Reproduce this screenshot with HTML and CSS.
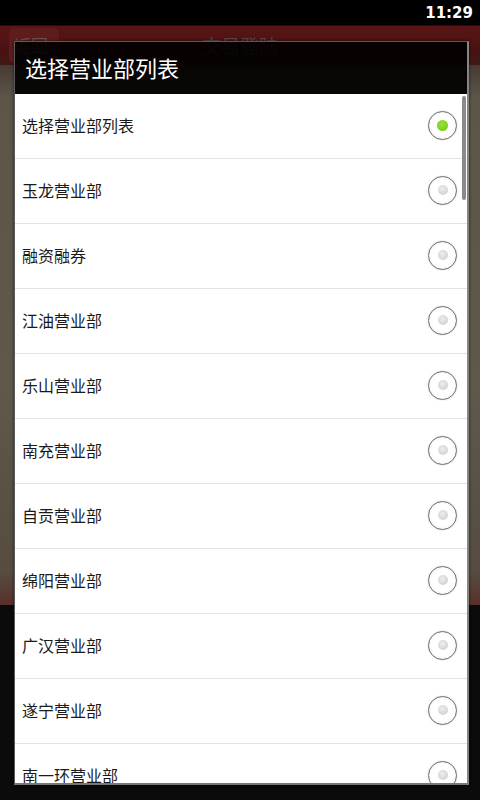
FILE: index.html
```html
<!DOCTYPE html>
<html lang="zh-CN">
<head>
    <meta charset="UTF-8">
    <meta name="viewport" content="width=device-width, initial-scale=1.0">
    <title>选择营业部列表</title>
    <link rel="stylesheet" href="styles.css">
</head>
<body>
    <div class="status">
        <span class="time">11:29</span>
    </div>
    <div class="screen">
        <div class="header">
            <span class="back">返回</span>
            <span class="header_title">交易登陆</span>
        </div>
        <div class="content"></div>
        <div class="bottom"></div>

        <!-- 弹出的营业部选择框 -->
        <div class="dialog">
            <div class="dialog_title">选择营业部列表</div>
            <div class="list">
                <ul>
                    <li><span>选择营业部列表</span><i class="radio checked"></i></li>
                    <li><span>玉龙营业部</span><i class="radio"></i></li>
                    <li><span>融资融券</span><i class="radio"></i></li>
                    <li><span>江油营业部</span><i class="radio"></i></li>
                    <li><span>乐山营业部</span><i class="radio"></i></li>
                    <li><span>南充营业部</span><i class="radio"></i></li>
                    <li><span>自贡营业部</span><i class="radio"></i></li>
                    <li><span>绵阳营业部</span><i class="radio"></i></li>
                    <li><span>广汉营业部</span><i class="radio"></i></li>
                    <li><span>遂宁营业部</span><i class="radio"></i></li>
                    <li><span>南一环营业部</span><i class="radio"></i></li>
                </ul>
                <div class="scrollbar"></div>
            </div>
        </div>
    </div>
</body>
</html>
```

FILE: styles.css
```css
*{
    margin: 0;
    padding: 0;
    box-sizing: border-box;
}
body{
    width: 480px;
    height: 800px;
    overflow: hidden;
    background-color: #0a0a0a;
    font-family: "Noto Sans CJK SC", "Noto Sans", sans-serif;
}
.status{
    height: 25px;
    background-color: #000;
    display: flex;
    justify-content: flex-end;
    align-items: center;
    padding-right: 7px;
}
.time{
    color: #fff;
    font-family: "DejaVu Sans", sans-serif;
    font-weight: bold;
    font-size: 15px;
}
.screen{
    position: relative;
    height: 775px;
}
.header{
    height: 40px;
    background: linear-gradient(#5a1515, #4a1212 60%, #3e1a14);
    border-top: 1px solid #2a0a0a;
    display: flex;
    align-items: center;
    position: relative;
}
.back{
    margin-left: 9px;
    width: 50px;
    height: 36px;
    border-radius: 6px;
    background-color: #5e1c1c;
    color: #6e5050;
    font-size: 17px;
    line-height: 34px;
    padding-left: 5px;
}
.header_title{
    position: absolute;
    left: 0;
    right: 0;
    text-align: center;
    color: #5a4444;
    font-size: 19px;
}
.content{
    height: 540px;
    background-color: #5d5649;
    background-image: linear-gradient(#463b32, #5c5548 6%, #5f584b 60%, #564c41 94%, #5a2f28);
}
.bottom{
    height: 195px;
    background-color: #0b0b0b;
}
.dialog{
    position: absolute;
    top: 16px;
    left: 14px;
    width: 455px;
    height: 744px;
    border: 1px solid #5a5a5a;
    border-right: 2px solid #858585;
    border-bottom: 2px solid #777;
    box-shadow: 0 0 3px rgba(0, 0, 0, 0.6);
    display: flex;
    flex-direction: column;
}
.dialog_title{
    height: 52px;
    background-color: rgba(0, 0, 0, 0.9);
    color: #fff;
    font-size: 22px;
    line-height: 50px;
    padding-left: 10px;
}
.list{
    position: relative;
    flex: 1;
    background-color: #fff;
    overflow: hidden;
}
li{
    list-style: none;
    height: 65px;
    border-bottom: 1px solid #e2e2e2;
    display: flex;
    align-items: center;
    justify-content: space-between;
    padding-left: 7px;
    padding-right: 10px;
    padding-bottom: 2px;
    color: #1a1a1a;
    font-size: 16px;
}
.radio{
    width: 29px;
    height: 29px;
    border-radius: 50%;
    border: 1.5px solid #6a6a6a;
    background: radial-gradient(circle, #fff 50%, #f3f3f3 100%);
    box-shadow: 0 0 2px rgba(0, 0, 0, 0.15);
    display: flex;
    justify-content: center;
    align-items: center;
}
.radio::after{
    content: "";
    width: 10px;
    height: 10px;
    border-radius: 50%;
    background: radial-gradient(circle at 45% 40%, #eeeeee, #c8c8c8);
}
.radio.checked::after{
    width: 11px;
    height: 11px;
    background: radial-gradient(circle at 45% 40%, #9ae23a, #6cc414);
}
.scrollbar{
    position: absolute;
    top: 2px;
    right: 1px;
    width: 4px;
    height: 104px;
    border-radius: 2px;
    background-color: #8a8a8a;
}
```
